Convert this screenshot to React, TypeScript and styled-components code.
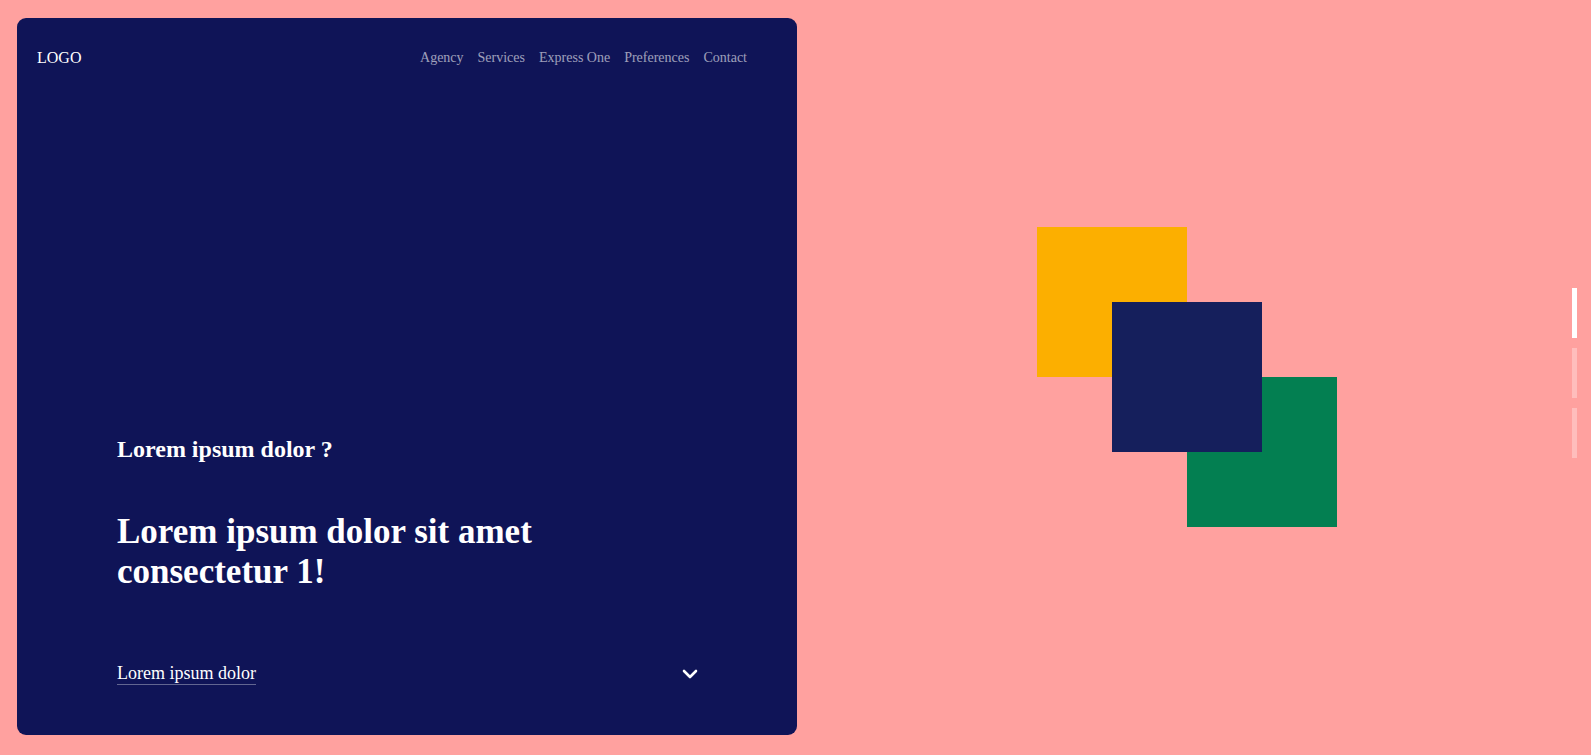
import styled, { createGlobalStyle } from 'styled-components'

const GlobalStyle = createGlobalStyle`
  html, body {
    margin: 0;
    padding: 0;
    height: 100%;
  }
  body {
    background: #ffa19f;
    font-family: 'Liberation Serif', 'Times New Roman', serif;
  }
`

const Page = styled.div`
  box-sizing: border-box;
  height: 100vh;
  padding: 18px 0 20px 17px;
  display: grid;
  grid-template-columns: 780px 1fr;
`

const Card = styled.section`
  display: flex;
  flex-direction: column;
  background: #0f1457;
  border-radius: 9px;
  color: #fff;
`

const Header = styled.header`
  display: flex;
  align-items: center;
  justify-content: space-between;
  padding: 31px 50px 0 20px;
`

const Logo = styled.div`
  font-size: 16px;
`

const Nav = styled.nav`
  display: flex;
  gap: 14px;
`

const NavLink = styled.a`
  font-size: 14px;
  color: rgba(255, 255, 255, 0.6);
  text-decoration: none;
`

const Content = styled.div`
  flex: 1;
  display: flex;
  flex-direction: column;
  justify-content: flex-end;
  padding: 0 100px 50px;
`

const Kicker = styled.h2`
  margin: 0;
  font-size: 24px;
  font-weight: bold;
`

const Title = styled.h1`
  margin: 49px 0 0;
  font-size: 35px;
  font-weight: bold;
`

const Footer = styled.div`
  margin-top: 71px;
  display: flex;
  align-items: center;
  justify-content: space-between;
`

const MoreLink = styled.a`
  font-size: 18px;
  color: #fff;
  text-decoration: none;
  border-bottom: 1px solid rgba(255, 255, 255, 0.35);
`

const Chevron = styled.svg`
  width: 16px;
  height: 10px;
  margin-right: -1px;
`

const Stage = styled.div`
  display: flex;
  align-items: center;
  justify-content: center;
  padding-right: 14px;
`

const Squares = styled.div`
  display: grid;
  grid-template-columns: repeat(4, 75px);
  grid-template-rows: repeat(4, 75px);
`

const Square = styled.div<{ $color: string; $at: number; $top?: boolean }>`
  background: ${(p) => p.$color};
  grid-column: ${(p) => p.$at} / span 2;
  grid-row: ${(p) => p.$at} / span 2;
  z-index: ${(p) => (p.$top ? 2 : 1)};
`

const Dots = styled.div`
  position: fixed;
  right: 14px;
  top: calc(50% - 90px);
  display: flex;
  flex-direction: column;
  gap: 10px;
`

const Dot = styled.span<{ $active?: boolean }>`
  display: block;
  width: 5px;
  height: 50px;
  background: ${(p) => (p.$active ? '#fff' : 'rgba(255, 255, 255, 0.3)')};
`

const links = ['Agency', 'Services', 'Express One', 'Preferences', 'Contact']

export default function App() {
  return (
    <>
      <GlobalStyle />
      <Page>
        <Card>
          <Header>
            <Logo>LOGO</Logo>
            <Nav>
              {links.map((l) => (
                <NavLink key={l} href="#">
                  {l}
                </NavLink>
              ))}
            </Nav>
          </Header>
          <Content>
            <Kicker>Lorem ipsum dolor ?</Kicker>
            <Title>Lorem ipsum dolor sit amet consectetur 1!</Title>
            <Footer>
              <MoreLink href="#">Lorem ipsum dolor</MoreLink>
              <Chevron viewBox="0 0 16 10" fill="none">
                <path d="M2 2 L8 8 L14 2" stroke="#fff" strokeWidth="2.6" strokeLinecap="round" strokeLinejoin="round" />
              </Chevron>
            </Footer>
          </Content>
        </Card>
        <Stage>
          <Squares>
            <Square $color="#fcaf00" $at={1} />
            <Square $color="#151f5c" $at={2} $top />
            <Square $color="#037f51" $at={3} />
          </Squares>
        </Stage>
      </Page>
      <Dots>
        <Dot $active />
        <Dot />
        <Dot />
      </Dots>
    </>
  )
}
